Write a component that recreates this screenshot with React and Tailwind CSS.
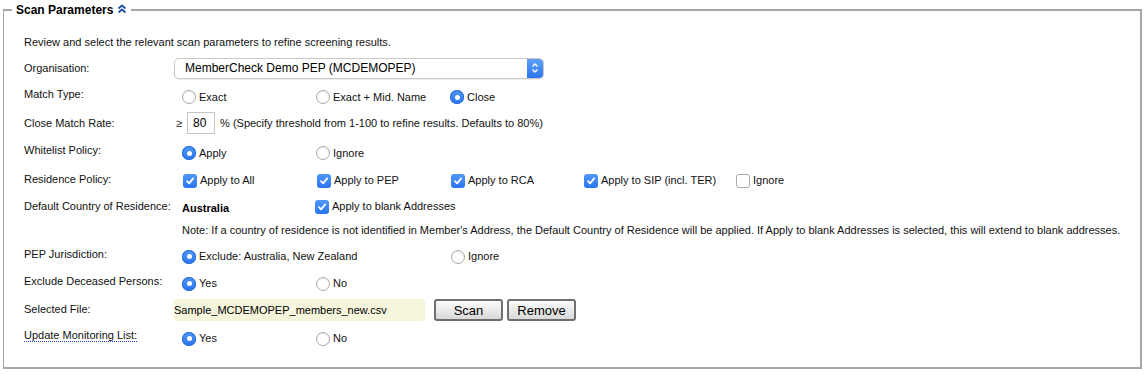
const font = { fontFamily: '"Liberation Sans", Arial, sans-serif' };

function Radio({ checked }) {
  return checked ? (
    <span className="flex h-[14px] w-[14px] shrink-0 items-center justify-center rounded-full bg-gradient-to-b from-[#4f97fa] to-[#2a75f0] shadow-[inset_0_0_0_1px_#2b6fdc]">
      <span className="h-[5px] w-[5px] rounded-full bg-white" />
    </span>
  ) : (
    <span className="h-[14px] w-[14px] shrink-0 rounded-full border border-[#a9a9a9] bg-white shadow-[inset_0_1px_1px_rgba(0,0,0,0.08)]" />
  );
}

function Check({ checked }) {
  return checked ? (
    <span className="flex h-[14px] w-[14px] shrink-0 items-center justify-center rounded-[3px] bg-gradient-to-b from-[#4f97fa] to-[#2a75f0]">
      <svg width="10" height="10" viewBox="0 0 10 10">
        <path d="M2 5.2 L4.1 7.4 L8.2 2.4" fill="none" stroke="white" strokeWidth="1.8" strokeLinecap="round" strokeLinejoin="round" />
      </svg>
    </span>
  ) : (
    <span className="h-[14px] w-[14px] shrink-0 rounded-[3px] border border-[#a9a9a9] bg-white" />
  );
}

function Opt({ w, checked, box, children }) {
  return (
    <label className={`flex items-center gap-[3px] whitespace-nowrap ${w}`}>
      {box ? <Check checked={checked} /> : <Radio checked={checked} />}
      <span>{children}</span>
    </label>
  );
}

// lift: label sits a little above its controls, as in the original form
function Row({ h, label, lift = "", drop = "", children, underline }) {
  return (
    <div className={`flex items-center ${h}`}>
      <div className={`w-[150px] shrink-0 whitespace-nowrap ${lift}`}>
        {underline ? (
          <span className="border-b border-dotted border-[#1d3fd0]">{label}</span>
        ) : (
          label
        )}
      </div>
      <div className={`flex items-center ${drop}`}>{children}</div>
    </div>
  );
}

export default function App() {
  return (
    <div className="h-[374px] w-[1148px] bg-white text-[11px] text-[#111]" style={font}>
      <fieldset className="ml-[3px] mr-[6px] border-t-2 border-r-2 border-b-2 border-l border-[#a6a6a6] px-[20px] pb-[17px]">
        <legend className="-ml-[12px] flex items-center gap-[4px] px-[4px] text-[12px] font-bold leading-[20px] text-black">
          Scan Parameters
          <svg width="10" height="10" viewBox="0 0 10 10" className="mb-[3px]">
            <path d="M1.5 4.5 L5 1.5 L8.5 4.5 M1.5 8.5 L5 5.5 L8.5 8.5" fill="none" stroke="#1f4fa5" strokeWidth="1.8" />
          </svg>
        </legend>

        <div className="pt-[10px]">
          <div className="flex h-[25px] items-center">
            Review and select the relevant scan parameters to refine screening results.
          </div>

          <Row h="h-[26px]" label="Organisation:">
            <div className="flex h-[21px] w-[370px] items-center justify-between overflow-hidden rounded-[5px] border border-[#c9c9c9] bg-white shadow-[0_1px_1px_rgba(0,0,0,0.08)]">
              <span className="pl-[10px] text-[12px] text-black">MemberCheck Demo PEP (MCDEMOPEP)</span>
              <span className="flex h-full w-[16px] items-center justify-center bg-gradient-to-b from-[#5ea2fb] to-[#2b74ef]">
                <svg width="8" height="12" viewBox="0 0 8 12">
                  <path d="M1.5 4.5 L4 2 L6.5 4.5 M1.5 7.5 L4 10 L6.5 7.5" fill="none" stroke="white" strokeWidth="1.4" />
                </svg>
              </span>
            </div>
          </Row>

          <Row h="h-[28px]" label="Match Type:" lift="pb-[2px]" drop="pt-[4px]">
            <div className="flex pl-[8px]">
              <Opt w="w-[134px]">Exact</Opt>
              <Opt w="w-[134px]">Exact + Mid. Name</Opt>
              <Opt w="w-[134px]" checked>Close</Opt>
            </div>
          </Row>

          <Row h="h-[28px]" label="Close Match Rate:">
            <span className="pl-[2px] pr-[5px]">≥</span>
            <span className="flex h-[22px] w-[28px] items-center border border-[#c4c4c4] pl-[5px] text-[12px] text-black">80</span>
            <span className="pl-[5px]">% (Specify threshold from 1-100 to refine results. Defaults to 80%)</span>
          </Row>

          <Row h="h-[28px]" label="Whitelist Policy:" lift="pb-[2px]" drop="pt-[4px]">
            <div className="flex pl-[8px]">
              <Opt w="w-[134px]" checked>Apply</Opt>
              <Opt w="w-[134px]">Ignore</Opt>
            </div>
          </Row>

          <Row h="h-[29px]" label="Residence Policy:" drop="pt-[2px]">
            <div className="flex pl-[9px]">
              <Opt w="w-[134px]" box checked>Apply to All</Opt>
              <Opt w="w-[134px]" box checked>Apply to PEP</Opt>
              <Opt w="w-[133px]" box checked>Apply to RCA</Opt>
              <Opt w="w-[152px]" box checked>Apply to SIP (incl. TER)</Opt>
              <Opt w="w-[80px]" box>Ignore</Opt>
            </div>
          </Row>

          <Row h="h-[25px]" label="Default Country of Residence:">
            <div className="flex pl-[8px]">
              <span className="w-[133px] pt-[3px] font-bold text-black">Australia</span>
              <Opt w="w-[200px]" box checked>Apply to blank Addresses</Opt>
            </div>
          </Row>

          <div className="flex h-[23px] items-center whitespace-nowrap pl-[158px]">
            Note: If a country of residence is not identified in Member's Address, the Default Country of Residence will be applied. If Apply to blank Addresses is selected, this will extend to blank addresses.
          </div>

          <Row h="h-[26px]" label="PEP Jurisdiction:" lift="pb-[2px]" drop="pt-[3px]">
            <div className="flex pl-[8px]">
              <Opt w="w-[269px]" checked>Exclude: Australia, New Zealand</Opt>
              <Opt w="w-[134px]">Ignore</Opt>
            </div>
          </Row>

          <Row h="h-[28px]" label="Exclude Deceased Persons:" lift="pb-[2px]" drop="pt-[3px]">
            <div className="flex pl-[8px]">
              <Opt w="w-[134px]" checked>Yes</Opt>
              <Opt w="w-[134px]">No</Opt>
            </div>
          </Row>

          <Row h="h-[27px]" label="Selected File:" lift="pb-[1px]" drop="pt-[1px]">
            <div className="flex h-[22px] w-[251px] items-center rounded-[3px] bg-[#f5f5dc] text-black">
              Sample_MCDEMOPEP_members_new.csv
            </div>
            <button className="ml-[9px] h-[22px] w-[69px] rounded-[3px] border-2 border-[#6f6f6f] bg-gradient-to-b from-[#fbfbfb] to-[#d9d9d9] text-[13px] text-black">
              Scan
            </button>
            <button className="ml-[4px] h-[22px] w-[69px] rounded-[3px] border-2 border-[#6f6f6f] bg-gradient-to-b from-[#fbfbfb] to-[#d9d9d9] text-[13px] text-black">
              Remove
            </button>
          </Row>

          <Row h="h-[27px]" label="Update Monitoring List:" underline lift="pb-[2px]" drop="pt-[4px]">
            <div className="flex pl-[8px]">
              <Opt w="w-[134px]" checked>Yes</Opt>
              <Opt w="w-[134px]">No</Opt>
            </div>
          </Row>
        </div>
      </fieldset>
    </div>
  );
}
